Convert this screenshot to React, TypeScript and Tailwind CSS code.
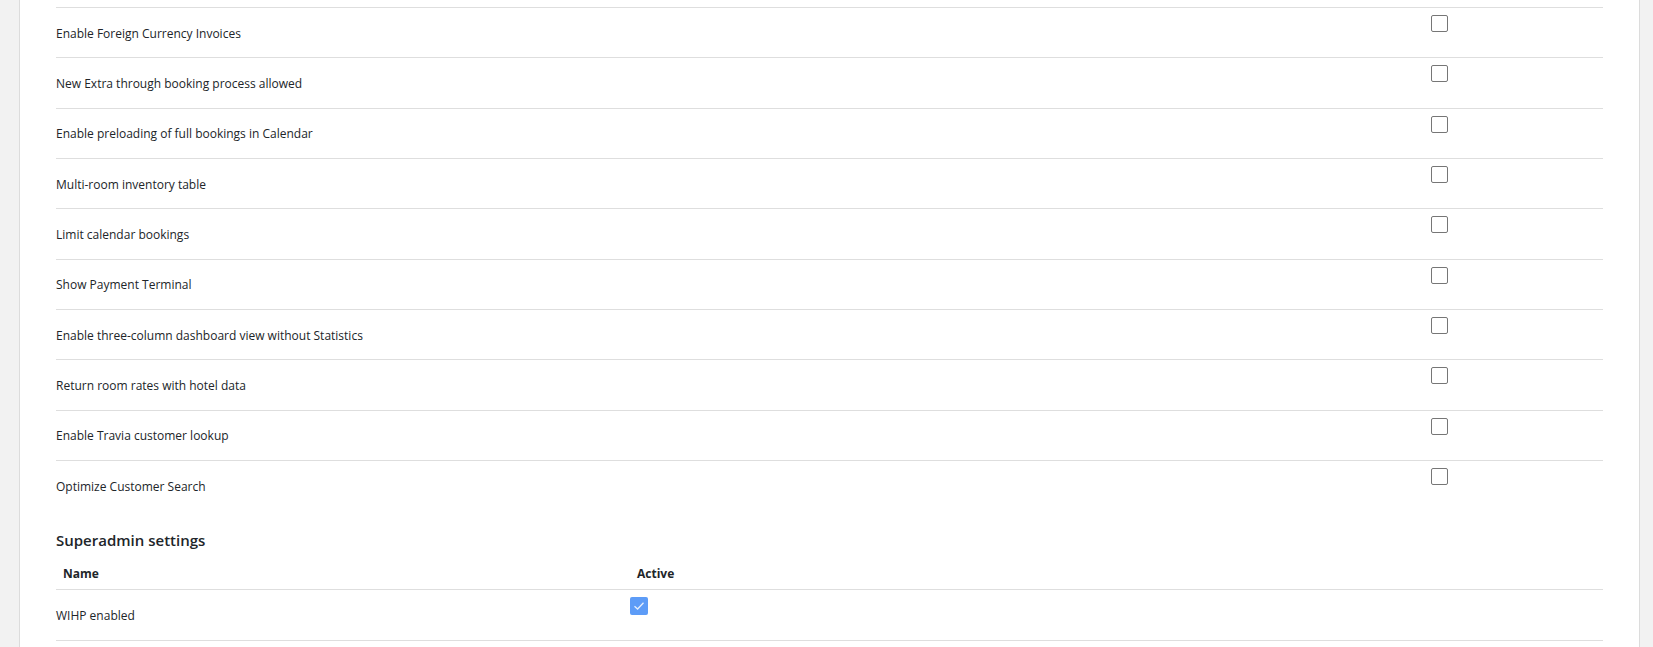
import React from 'react';

const settings: string[] = [
  'Enable Foreign Currency Invoices',
  'New Extra through booking process allowed',
  'Enable preloading of full bookings in Calendar',
  'Multi-room inventory table',
  'Limit calendar bookings',
  'Show Payment Terminal',
  'Enable three-column dashboard view without Statistics',
  'Return room rates with hotel data',
  'Enable Travia customer lookup',
  'Optimize Customer Search',
];

const Checkbox: React.FC<{ checked?: boolean }> = ({ checked }) =>
  checked ? (
    <div className="w-[18px] h-[18px] rounded-[2px] bg-[#5d9cf7] flex items-center justify-center">
      <svg width="12" height="10" viewBox="0 0 12 10" fill="none">
        <path d="M1.5 5.2 L4.6 8 L10.5 1.8" stroke="#e6effd" strokeWidth="1.3" />
      </svg>
    </div>
  ) : (
    <div className="w-[17px] h-[17px] rounded-[2px] border border-[#767676] bg-white" />
  );

const App: React.FC = () => {
  return (
    <div
      className="h-screen overflow-hidden bg-[#f2f2f2] pl-[19px] pr-[13px] text-[#212529]"
      style={{ fontFamily: '"Open Sans", "Noto Sans", sans-serif' }}
    >
      <div className="h-full bg-white border-x border-[#dcdcdc] px-9 pt-[7px]">
        {/* Settings list */}
        <div>
          {settings.map((label) => (
            <div
              key={label}
              className="grid grid-cols-[1375px_1fr] h-[50.33px] border-t border-[#dedede]"
            >
              <div className="flex items-center text-[12px] pt-[2px]">{label}</div>
              <div className="pt-[7px]">
                <Checkbox />
              </div>
            </div>
          ))}
        </div>

        {/* Superadmin */}
        <h3 className="mt-[18px] text-[15px] font-semibold leading-6">Superadmin settings</h3>
        <div className="mt-[6px]">
          <div className="grid grid-cols-[574px_1fr] h-[32px] items-center text-[12px] font-bold border-b border-[#dedede]">
            <div className="pl-[7px]">Name</div>
            <div className="pl-[7px]">Active</div>
          </div>
          <div className="grid grid-cols-[574px_1fr] h-[51px] border-b border-[#dedede]">
            <div className="flex items-center text-[12px] pt-[2px]">WIHP enabled</div>
            <div className="pt-[7px]">
              <Checkbox checked />
            </div>
          </div>
        </div>
      </div>
    </div>
  );
};

export default App;
